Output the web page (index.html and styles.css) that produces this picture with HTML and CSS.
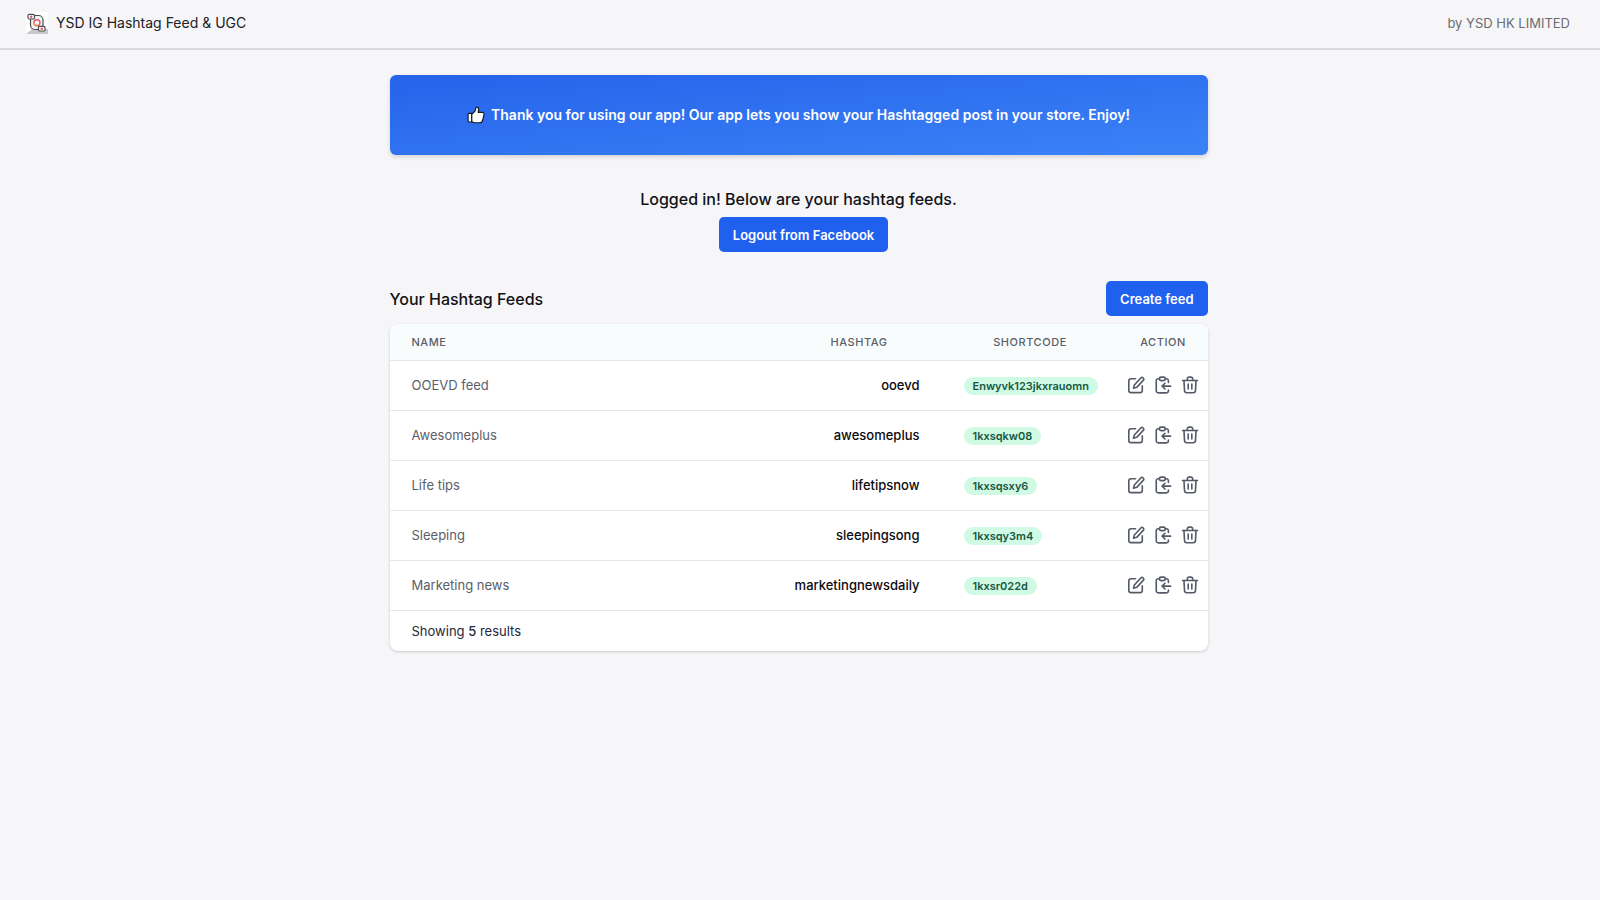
FILE: index.html
```html
<!DOCTYPE html>
<html lang="en">
<head>
    <meta charset="UTF-8">
    <meta name="viewport" content="width=device-width, initial-scale=1.0">
    <title>YSD IG Hashtag Feed &amp; UGC</title>
    <link rel="stylesheet" href="styles.css">
</head>
<body>

<!-- Icons shared by the table rows -->
<svg class="sprite" aria-hidden="true">
    <symbol id="icon-edit" viewBox="0 0 20 20">
        <path d="M9.5 3H4.500A2.5 2.5 0 0 0 2 5.500v10.500a2.500 2.500 0 0 0 2.500 2.500h10a2.500 2.500 0 0 0 2.500-2.500V11"/>
        <path d="M15.300 2.200a1.900 1.900 0 0 1 2.700 2.700l-7.200 7.700-3.600 1 1-3.600z"/>
    </symbol>
    <symbol id="icon-copy" viewBox="0 0 20 20">
        <path d="M6 3H4.700A2.200 2.200 0 0 0 2.500 5.200v11.300a2.200 2.200 0 0 0 2.200 2.200h9.100a2.200 2.200 0 0 0 2.200-2.200V15.500M12.500 3h1.300A2.200 2.200 0 0 1 16 5.200V7.200"/>
        <rect x="6" y="1.200" width="6.500" height="4" rx="1.800"/>
        <path d="M18.500 11.300H9M12.200 8.100L9 11.300l3.200 3.200"/>
    </symbol>
    <symbol id="icon-delete" viewBox="0 0 20 20">
        <path d="M1.700 5h16.600M7 5V3.200A1.900 1.900 0 0 1 8.900 1.300h2.200A1.900 1.900 0 0 1 13 3.200V5"/>
        <path d="M3.300 5l.6 11.200a2.500 2.500 0 0 0 2.500 2.400h7.200a2.500 2.500 0 0 0 2.500-2.400L16.700 5M8 9v5.500M12 9v5.500"/>
    </symbol>
</svg>

<header class="topbar">
    <div class="brand">
        <svg class="logo" viewBox="0 0 22 22" aria-hidden="true">
            <rect width="22" height="22" fill="#fff"/>
            <path d="M0 22l6-5h16v5z" fill="#c9c9cb"/>
            <rect x="4.500" y="3.500" width="12.500" height="14" rx="4.500" fill="#f4f4f5" stroke="#4b4c50" stroke-width="1.200"/>
            <circle cx="11" cy="10.800" r="3" fill="#fff" stroke="#e8575e" stroke-width="1.400"/>
            <path d="M8 11a3 3 0 0 0 3 2.800" fill="none" stroke="#f09a55" stroke-width="1.400"/>
            <rect x="2" y="2.300" width="6.500" height="4.700" rx="1.200" fill="#fff" stroke="#4b4c50" stroke-width="1.200"/>
            <rect x="12.500" y="14.300" width="6.500" height="4.700" rx="1.200" fill="#fff" stroke="#4b4c50" stroke-width="1.200"/>
            <circle cx="5.200" cy="4.700" r="1.200" fill="#e8575e"/>
            <circle cx="15.700" cy="16.700" r="1.200" fill="#e8575e"/>
        </svg>
        <span>YSD IG Hashtag Feed &amp; UGC</span>
    </div>
    <span class="vendor">by YSD HK LIMITED</span>
</header>

<main class="page">
    <div class="banner">
        <svg class="thumb" viewBox="0 0 20 20" aria-hidden="true">
            <path d="M1.200 9.800c0-1 .7-1.600 1.600-1.600h2.500v9.600H2.900c-.9 0-1.700-.7-1.700-1.700z"/>
            <path d="M5.300 9.200l3.400-3.400c.7-.8.900-2 1-3.200.1-1 .7-1.500 1.500-1.400 1.300.2 1.800 1.500 1.700 2.900L12.500 7H17c1.400 0 2.200 1.200 1.900 2.500l-1.600 6.400c-.4 1.600-1.300 2.700-3.100 2.700H9.100c-1.600 0-2.700-.7-3.800-1.400z"/>
        </svg>
        <span>Thank you for using our app! Our app lets you show your Hashtagged post in your store. Enjoy!</span>
    </div>

    <section class="account">
        <h2>Logged in! Below are your hashtag feeds.</h2>
        <button class="btn logout" type="button">Logout from Facebook</button>
    </section>

    <div class="feeds-head">
        <h2>Your Hashtag Feeds</h2>
        <button class="btn" type="button">Create feed</button>
    </div>

    <div class="card">
        <table class="feeds">
            <thead>
                <tr>
                    <th class="col-name">Name</th>
                    <th class="col-hashtag">Hashtag</th>
                    <th class="col-code">Shortcode</th>
                    <th class="col-action">Action</th>
                </tr>
            </thead>
            <tbody id="feed-rows"></tbody>
        </table>
        <div class="summary">Showing <strong id="feed-count">5</strong> results</div>
    </div>
</main>

<script>
    const feeds = [
        { name: 'OOEVD feed', hashtag: 'ooevd', code: 'Enwyvk123jkxrauomn' },
        { name: 'Awesomeplus', hashtag: 'awesomeplus', code: '1kxsqkw08' },
        { name: 'Life tips', hashtag: 'lifetipsnow', code: '1kxsqsxy6' },
        { name: 'Sleeping', hashtag: 'sleepingsong', code: '1kxsqy3m4' },
        { name: 'Marketing news', hashtag: 'marketingnewsdaily', code: '1kxsr022d' }
    ];

    const actions = ['edit', 'copy', 'delete'];

    function actionButton(action, feed) {
        return `<button class="icon-btn" type="button" aria-label="${action} ${feed.name}"><svg><use href="#icon-${action}"/></svg></button>`;
    }

    // Fill the table
    document.getElementById('feed-rows').innerHTML = feeds.map(feed => `
        <tr>
            <td>${feed.name}</td>
            <td class="hashtag">${feed.hashtag}</td>
            <td><span class="badge">${feed.code}</span></td>
            <td class="actions"><div class="action-list">${actions.map(a => actionButton(a, feed)).join('')}</div></td>
        </tr>`).join('');

    document.getElementById('feed-count').textContent = feeds.length;
</script>
</body>
</html>
```
FILE: styles.css
```css
* {
    box-sizing: border-box;
}
body {
    margin: 0;
    background-color: #f6f6f8;
    color: #111217;
    font-family: Inter, "Liberation Sans", sans-serif;
    font-size: 13px;
    line-height: 20px;
}
h2 {
    margin: 0;
    font-size: 16px;
    font-weight: 500;
    line-height: 24px;
}
.sprite {
    position: absolute;
    width: 0;
    height: 0;
}
.topbar {
    display: flex;
    justify-content: space-between;
    align-items: center;
    height: 50px;
    padding: 0 30px 2px 26px;
    border-bottom: 2px solid #d8dcdc;
}
.brand {
    display: flex;
    align-items: center;
    gap: 8px;
    font-size: 14px;
    color: #202124;
}
.logo {
    width: 22px;
    height: 22px;
}
.vendor {
    color: #6b6c70;
}
.page {
    max-width: 869px;
    margin: 0 auto;
    padding: 25px 27px 40px 24px;
}
.banner {
    display: flex;
    justify-content: center;
    align-items: center;
    gap: 6px;
    min-height: 80px;
    padding: 16px;
    border-radius: 6px;
    background: linear-gradient(to bottom right, #2563eb, #3b82f6);
    color: #fff;
    font-size: 14px;
    font-weight: 600;
    box-shadow: 0 2px 4px rgba(0, 0, 0, 0.15);
}
.thumb {
    width: 18px;
    height: 18px;
    fill: #fff;
    stroke: #16181f;
    stroke-width: 1.3;
    stroke-linejoin: round;
}
.account {
    padding: 32px 0 29px;
    text-align: center;
}
.account h2 {
    margin-bottom: 6px;
}
.btn {
    height: 35px;
    padding: 0 14px;
    border: none;
    border-radius: 5px;
    background-color: #2060ee;
    color: #fff;
    font-family: inherit;
    font-size: 13px;
    font-weight: 600;
    cursor: pointer;
}
.btn:hover {
    background-color: #1d4ed8;
}
.logout {
    margin-left: 10px;
    vertical-align: top;
}
.feeds-head {
    display: flex;
    justify-content: space-between;
    align-items: center;
    margin-bottom: 8px;
}
.card {
    overflow: hidden;
    border-radius: 8px;
    background-color: #fff;
    box-shadow: 0 1px 3px rgba(0, 0, 0, 0.18);
}
.feeds {
    width: 100%;
    border-collapse: collapse;
    table-layout: fixed;
}
.feeds th {
    height: 36px;
    padding: 0 22px;
    background-color: #f9fcfd;
    color: #5b5e69;
    font-size: 11px;
    font-weight: 500;
    letter-spacing: 0.05em;
    text-transform: uppercase;
}
.feeds .col-name {
    text-align: left;
}
.col-hashtag {
    width: 165px;
}
.col-code {
    width: 177px;
}
.feeds .col-action {
    width: 89px;
    padding: 0;
}
.feeds td {
    height: 50px;
    padding: 0 22px;
    border-top: 1px solid #e7e7ea;
    color: #5b5e69;
}
.feeds .hashtag {
    padding-left: 0;
    color: #0b0b0f;
    font-weight: 500;
    text-align: right;
}
.badge {
    display: inline-block;
    padding: 0 9px;
    border-radius: 9px;
    background-color: #d1fae5;
    color: #17573f;
    font-size: 11px;
    font-weight: 600;
    line-height: 18px;
    vertical-align: middle;
}
.feeds .actions {
    padding: 0 8px;
}
.action-list {
    display: flex;
    gap: 9px;
}
.icon-btn {
    display: flex;
    padding: 0;
    border: none;
    background: none;
    color: #555a68;
    cursor: pointer;
}
.icon-btn svg {
    width: 18px;
    height: 18px;
    fill: none;
    stroke: currentColor;
    stroke-width: 1.8;
    stroke-linecap: round;
    stroke-linejoin: round;
}
.summary {
    padding: 10px 22px;
    border-top: 1px solid #e7e7ea;
    color: #25283a;
}
.summary strong {
    font-weight: 500;
}
```
